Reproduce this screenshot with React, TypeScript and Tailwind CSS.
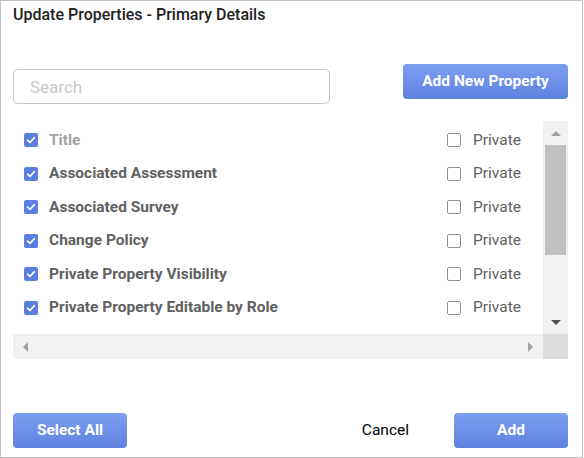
import React from 'react';

const rows = [
  { label: 'Title', disabled: true },
  { label: 'Associated Assessment' },
  { label: 'Associated Survey' },
  { label: 'Change Policy' },
  { label: 'Private Property Visibility' },
  { label: 'Private Property Editable by Role' },
  { label: 'Work Group' },
];

const Checked = () => (
  <span className="flex h-[14px] w-[14px] shrink-0 items-center justify-center rounded-[2px] bg-[#5b7fe0]">
    <svg width="10" height="10" viewBox="0 0 10 10" fill="none">
      <path d="M1.6 5.2 L4 7.4 L8.4 2.6" stroke="white" strokeWidth="1.6" strokeLinecap="round" strokeLinejoin="round" />
    </svg>
  </span>
);

const Unchecked = () => (
  <span className="block h-[14px] w-[14px] shrink-0 rounded-[2px] border-[1.5px] border-[#8f8f8f] bg-white" />
);

const BlueButton: React.FC<{ children: React.ReactNode; className?: string }> = ({ children, className }) => (
  <button
    className={`h-[35px] rounded-[4px] bg-linear-to-b from-[#7d9ff2] to-[#5d82df] text-[15.5px] font-bold text-white ${className ?? ''}`}
  >
    {children}
  </button>
);

export default function App() {
  return (
    <div
      className="flex h-[458px] w-[583px] flex-col border border-[#c2c2c2] bg-white"
      style={{ fontFamily: 'Roboto, "Liberation Sans", sans-serif' }}
    >
      <div className="px-[12px] pt-[4px] text-[16px] font-medium leading-[20px] text-[#212121]">
        Update Properties - Primary Details
      </div>

      {/* search + add */}
      <div className="mt-[39px] flex items-start justify-between pl-[12px] pr-[14px]">
        <div className="mt-[5px] flex h-[35px] w-[317px] items-center rounded-[5px] border border-[#c6c6c6] px-[16px] pt-[2px] text-[17px] text-[#c9c9c9]">
          Search
        </div>
        <BlueButton className="w-[165px]">Add New Property</BlueButton>
      </div>

      {/* list */}
      <div className="ml-[12px] mt-[17px] grid w-[556px] grid-cols-[530px_25px] grid-rows-[213px_25px]">
        <div className="overflow-hidden pt-[2.5px]">
          {rows.map((r) => (
            <div key={r.label} className="flex h-[33.5px] items-center pl-[11px]">
              <Checked />
              <span
                className={`ml-[11px] w-[398px] whitespace-nowrap text-[15.5px] font-bold ${r.disabled ? 'text-[#a3a3a3]' : 'text-[#616161]'}`}
              >
                {r.label}
              </span>
              <Unchecked />
              <span className="ml-[12px] text-[15.5px] text-[#616161]">Private</span>
            </div>
          ))}
        </div>
        {/* vertical scrollbar */}
        <div className="flex flex-col items-center bg-[#f1f1f1]">
          <div className="flex h-[24px] w-full items-center justify-center">
            <span className="h-0 w-0 border-x-[5px] border-b-[5px] border-x-transparent border-b-[#a3a3a3]" />
          </div>
          <div className="h-[110px] w-[21px] bg-[#c1c1c1]" />
          <div className="flex-1" />
          <div className="flex h-[24px] w-full items-center justify-center">
            <span className="h-0 w-0 border-x-[5px] border-t-[5px] border-x-transparent border-t-[#505050]" />
          </div>
        </div>
        {/* horizontal scrollbar */}
        <div className="flex items-center justify-between bg-[#f1f1f1] px-[10px]">
          <span className="h-0 w-0 border-y-[5px] border-r-[5px] border-y-transparent border-r-[#a3a3a3]" />
          <span className="h-0 w-0 border-y-[5px] border-l-[5px] border-y-transparent border-l-[#a3a3a3]" />
        </div>
        <div className="bg-[#dcdcdc]" />
      </div>

      <div className="flex-1" />

      {/* footer */}
      <div className="mb-[9px] flex items-center pl-[12px] pr-[14px]">
        <BlueButton className="w-[114px]">Select All</BlueButton>
        <div className="flex-1" />
        <button className="mr-[45px] text-[15.5px] text-black">Cancel</button>
        <BlueButton className="w-[114px]">Add</BlueButton>
      </div>
    </div>
  );
}
